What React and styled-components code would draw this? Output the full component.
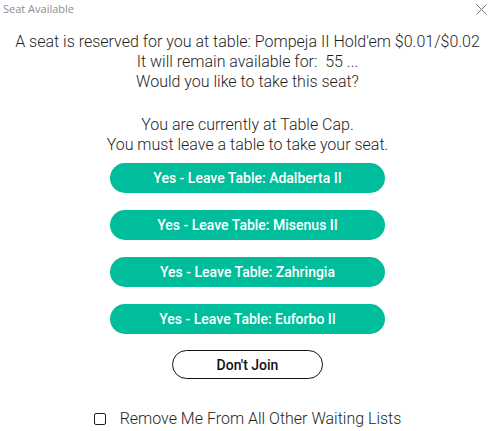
import React from 'react';
import styled, { createGlobalStyle } from 'styled-components';

const Global = createGlobalStyle`
  html, body {
    margin: 0;
    padding: 0;
    background: #fff;
  }
  * { box-sizing: border-box; }
`;

const Window = styled.div`
  width: 495px;
  height: 431px;
  display: flex;
  flex-direction: column;
  font-family: Roboto, "Liberation Sans", sans-serif;
  color: #1f1f1f;
`;

const TitleBar = styled.div`
  height: 17px;
  display: flex;
  align-items: center;
  justify-content: space-between;
  padding: 0 8px 0 3px;
`;

const Title = styled.span`
  font-family: "Segoe UI", "Open Sans", "Noto Sans", sans-serif;
  font-size: 11px;
  color: #8c8c8c;
`;

const Close = styled.svg`
  width: 11px;
  height: 11px;
  margin-top: 1px;
`;

const Body = styled.div`
  display: flex;
  flex-direction: column;
  align-items: center;
  padding-top: 15px;
`;

const Message = styled.p`
  margin: ${p => p.$top || 0}px 0 0;
  text-align: center;
  font-weight: 300;
  font-size: 16px;
  line-height: 20px;
`;

const Buttons = styled.div`
  display: flex;
  flex-direction: column;
  align-items: center;
  gap: 17px;
  margin-top: 8px;
`;

const LeaveButton = styled.button`
  width: 275px;
  height: 30px;
  border: none;
  border-radius: 15px;
  background: #00be9b;
  color: #fff;
  font-family: Roboto, "Liberation Sans", sans-serif;
  font-weight: 500;
  font-size: 14px;
  cursor: pointer;
`;

const DeclineButton = styled.button`
  width: 151px;
  height: 29px;
  margin-top: 16px;
  border: 1px solid #111;
  border-radius: 15px;
  background: #fff;
  color: #111;
  font-family: Roboto, "Liberation Sans", sans-serif;
  font-weight: 500;
  font-size: 14px;
  cursor: pointer;
`;

const CheckRow = styled.label`
  display: flex;
  align-items: center;
  gap: 14px;
  margin-top: 30px;
  font-weight: 300;
  font-size: 16px;
  line-height: 20px;
  cursor: pointer;
`;

const Box = styled.span`
  width: 12px;
  height: 12px;
  border: 1px solid #222;
  border-radius: 2px;
  background: #fff;
`;

const tables = ['Adalberta II', 'Misenus II', 'Zahringia', 'Euforbo II'];

export default function App() {
  return (
    <Window>
      <Global />
      <TitleBar>
        <Title>Seat Available</Title>
        <Close viewBox="0 0 11 11">
          <path d="M0.5 0.5 L10.5 10.5 M10.5 0.5 L0.5 10.5" stroke="#777" strokeWidth="1" fill="none" />
        </Close>
      </TitleBar>
      <Body>
        <Message>
          A seat is reserved for you at table: Pompeja II Hold'em $0.01/$0.02<br />
          It will remain available for:&nbsp; 55 ...<br />
          Would you like to take this seat?
        </Message>
        <Message $top={23}>
          You are currently at Table Cap.<br />
          You must leave a table to take your seat.
        </Message>
        <Buttons>
          {tables.map(t => (
            <LeaveButton key={t}>Yes - Leave Table: {t}</LeaveButton>
          ))}
        </Buttons>
        <DeclineButton>Don't Join</DeclineButton>
        <CheckRow>
          <Box />
          Remove Me From All Other Waiting Lists
        </CheckRow>
      </Body>
    </Window>
  );
}
